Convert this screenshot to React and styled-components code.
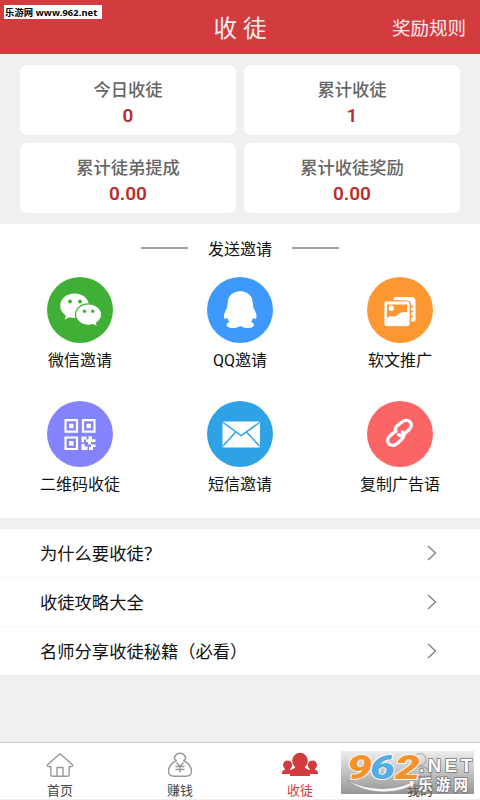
import React from 'react'
import styled, { createGlobalStyle } from 'styled-components'

const GlobalStyle = createGlobalStyle`
  * {
    box-sizing: border-box;
  }
  body {
    margin: 0;
    background: #f0f0f0;
    font-family: Roboto, "Noto Sans CJK SC", sans-serif;
    color: #111;
  }
`

const Page = styled.div`
  position: relative;
  display: flex;
  flex-direction: column;
  width: 480px;
  height: 800px;
  overflow: hidden;
  background: #f0f0f0;
`

const Header = styled.header`
  display: grid;
  grid-template-columns: 1fr auto 1fr;
  align-items: center;
  height: 54px;
  padding: 3px 14px 0;
  background: #d33c3e;
  color: #fdeeee;
`

const Title = styled.h1`
  grid-column: 2;
  margin: 0;
  font-size: 23.5px;
  font-weight: 400;
  line-height: 30px;
`

const Rules = styled.span`
  justify-self: end;
  font-size: 18.5px;
  line-height: 24px;
`

const SiteTag = styled.div`
  position: absolute;
  left: 4px;
  top: 5px;
  width: 98px;
  height: 14px;
  background: #fff;
  color: #000;
  font: bold 9.3px/15px "Noto Sans", "Noto Sans CJK SC", sans-serif;
  letter-spacing: 0.12px;
  white-space: nowrap;
  padding-left: 1px;
`

const Stats = styled.section`
  display: grid;
  grid-template-columns: 1fr 1fr;
  grid-auto-rows: 70px;
  gap: 8px;
  padding: 11px 20px;
`

const Card = styled.div`
  display: flex;
  flex-direction: column;
  align-items: center;
  padding-top: 12px;
  border-radius: 7px;
  background: #fff;
  font-size: 17.3px;
  font-weight: 500;
  line-height: 26px;
  color: #666;
`

const Amount = styled.strong`
  font-size: 19px;
  font-weight: 600;
  line-height: 26px;
  color: #b92d30;
`

const Invite = styled.section`
  height: 294px;
  background: #fff;
`

const Divider = styled.h2`
  display: flex;
  align-items: center;
  justify-content: center;
  gap: 20px;
  margin: 0;
  height: 47px;
  font-size: 16px;
  font-weight: 400;

  &::before,
  &::after {
    content: '';
    width: 47px;
    height: 2px;
    background: #a2a2a2;
  }
`

const Channels = styled.div`
  display: grid;
  grid-template-columns: repeat(3, 160px);
  grid-auto-rows: 123.5px;
  padding-top: 6px;
`

const Channel = styled.div`
  display: flex;
  flex-direction: column;
  align-items: center;
  gap: 6px;
  font-size: 16px;
  line-height: 24px;
`

const Disc = styled.div`
  display: flex;
  flex: none;
  width: 66px;
  height: 66px;
  border-radius: 50%;
  background: ${p => p.color};
`

const Faq = styled.section`
  margin-top: 11px;
  background: #fff;
`

const FaqRow = styled.div`
  display: flex;
  align-items: center;
  justify-content: space-between;
  height: 49px;
  padding: 0 42px 0 40px;
  font-size: 17.3px;
  border-bottom: 1px solid #f8f8f8;

  &:last-child {
    height: 48px;
    border-bottom: 0;
  }

  span {
    padding-bottom: 2px;
  }
`

const TabBar = styled.nav`
  display: grid;
  grid-template-columns: repeat(4, 120px);
  height: 58px;
  margin-top: auto;
  background: #fff;
  border-top: 1px solid #ccc;
  border-bottom: 1px solid #eee;
`

const Tab = styled.div`
  display: flex;
  flex-direction: column;
  align-items: center;
  padding-top: 9px;
  gap: 3px;
  font-size: 13px;
  line-height: 20px;
  color: ${p => (p.$active ? `#d33c3e` : `#444`)};
`

const Watermark = styled.div`
  position: absolute;
  left: 341px;
  top: 751px;
  width: 133px;
  height: 43px;
  background: linear-gradient(rgba(225, 225, 225, 0.6), rgba(100, 100, 100, 0.68));

  svg {
    display: block;
    overflow: visible;
  }
`

const Wechat = () => (
  <svg width="66" height="66" viewBox="0 0 66 66" fill="#fff">
    <path d="M27.500 16.500c-8.100 0-14.300 5.500-14.300 12.300 0 4.100 2 7.400 5.700 9.600l-1.300 4.200 5-2.400c1.700.5 3.300.8 5 .8 8 0 14.500-5.300 14.500-12.200S35.600 16.500 27.500 16.500z" />
    <path
      d="M41.500 26.800c-7.300 0-13 4.800-13 10.700s5.700 10.800 13 10.800c1.500 0 3-.2 4.300-.7l4.800 2.300-1-4c3-1.900 5-5 5-8.400 0-5.900-5.800-10.700-13.100-10.700z"
      stroke="#3fb035"
      strokeWidth="1.200"
    />
    <g fill="#3fb035">
      <circle cx="23" cy="24.500" r="2" />
      <circle cx="33" cy="24.500" r="2" />
      <circle cx="37.500" cy="34.200" r="1.700" />
      <circle cx="45.700" cy="34.200" r="1.700" />
    </g>
  </svg>
)

const QQ = () => (
  <svg width="66" height="66" viewBox="0 0 66 66" fill="#fff">
    <path d="M33.300 14.200c-8 0-12.600 5.400-12.600 12 0 1.500-.8 3-.6 4.500-2.300 3.600-3.600 7.500-2.900 10.300.4 1.500 1.700 1.100 3.200-.6.3 1.500.9 3 2.200 4.500-2.300.6-3 1.600-3 3 0 2.300 3.600 3.300 7.400 3 2.600-.2 4.800-.9 6.300-2 1.500 1.100 3.600 1.800 6.200 2 3.700.3 7.400-.7 7.400-3 0-1.400-.7-2.400-3-3 1.300-1.500 1.900-3 2.200-4.500 1.500 1.700 2.800 2.100 3.200.6.700-2.800-.6-6.700-2.900-10.300.2-1.500-.6-3-.6-4.500 0-6.600-4.500-12-12.500-12z" />
  </svg>
)

const Article = () => (
  <svg width="66" height="66" viewBox="0 0 66 66">
    <path d="M26.500 23v-1.500q0-1.500 1.500-1.500h16.500q4 0 4 4v19q0 1.500-1.500 1.500h-3V27q0-3-3-3z" fill="#fff" />
    <rect x="17" y="24" width="26" height="25.500" rx="2.800" fill="#fff" stroke="#fc9732" strokeWidth=".8" />
    <path d="M20 41V27.500h20v8c-8-2.500-9 5-14 4-2.500-.5-4-.8-6 1.500z" fill="#fc9732" />
    <circle cx="24.300" cy="31.300" r="2.700" fill="#fff" />
    <path d="M43.500 29.500h2.800M43.500 34.500h2.800M43.500 39.500h2.800" stroke="#fc9732" strokeWidth="1.400" />
  </svg>
)

const QrCode = () => (
  <svg width="66" height="66" viewBox="0 0 66 66" fill="none" stroke="#fff">
    <path
      d="M18.500 19.200h11.500v11.500H18.500zM36 19.200h11.500v11.500H36zM18.500 36.500h11.500V48H18.500z"
      strokeWidth="2.200"
    />
    <path
      d="M22 22.700h4.500v4.500H22zM39.500 22.700H44v4.500h-4.500zM22 40h4.500v4.500H22zM34.500 35.500h5v3H37v3h-2.500zM41.500 35.300H45v3h3.500V41H44v2.500h-3V41h-2v-2.500h2.500zM34.500 43h3v2.500h3V49h-6zM44 43.500h4.500V46H46v3h-4v-3h2z"
      fill="#fff"
      stroke="none"
    />
  </svg>
)

const Sms = () => (
  <svg width="66" height="66" viewBox="0 0 66 66">
    <rect x="15.500" y="20.500" width="37.500" height="26" rx="1.500" fill="#fff" />
    <path
      d="M16 21.500l18.200 13 18.300-13M16 45l12.700-14M52.500 45L39.500 31"
      fill="none"
      stroke="#2fa2e5"
      strokeWidth="1.500"
    />
  </svg>
)

const CopyLink = () => (
  <svg width="66" height="66" viewBox="0 0 66 66" fill="none" stroke="#fff" strokeWidth="3.300" strokeLinecap="round">
    <path d="M29 30.500c-1.300-1.900-.8-3.700.8-5.300l4.500-3.700c2.900-2.600 6.500-2.900 8.600-.8 2.300 2.200 1.900 5.300-.8 7.900l-4.800 4.300c-1.900 1.600-4 2-5.900.8" />
    <path d="M35.500 31c2.200 2.200 1.600 4.800-.4 6.800l-4.400 4.200c-2.800 2.700-6.500 3.100-8.700.9-2.200-2.100-1.800-5.300.9-7.900l4-3.600" />
  </svg>
)

const Chevron = () => (
  <svg width="11" height="16" viewBox="0 0 11 16" fill="none" stroke="#888" strokeWidth="1.500">
    <path d="M1 1l7.500 7L1 15" />
  </svg>
)

const Home = () => (
  <svg width="28" height="26" viewBox="0 0 28 26" fill="none" stroke="#999" strokeWidth="1.400" strokeLinejoin="round">
    <path d="M14 1.700L1.500 12.700q-.8 1.800 1.300 1.800h2v8q0 1.800 1.800 1.800h15q1.600 0 1.600-1.800v-8h2q2 0 1.300-1.800z" />
    <path d="M11 24v-8.500h6V24" />
  </svg>
)

const Earn = () => (
  <svg width="28" height="26" viewBox="0 0 28 26" fill="none" stroke="#999" strokeWidth="1.400" strokeLinejoin="round">
    <path d="M10.500 8.500C7.700 7 7.700 5.300 9.300 4.500 9.700 2.300 12 1.300 14 1.300s4.300 1 4.700 3.200c1.600.8 1.600 2.500-1.200 4 4.500 2 8 6.500 8 10.300 0 3.800-2.500 5.500-5.500 5.500H8c-3 0-5.500-1.700-5.500-5.500 0-3.800 3.500-8.300 8-10.300z" />
    <path d="M10.500 10.500l3.500 4 3.500-4M9.500 14.500h9M9.500 17.500h9M14 14.500v6" />
  </svg>
)

const Apprentices = () => (
  <svg width="36" height="26" viewBox="0 0 36 26" fill="#d33c3e">
    <ellipse cx="18" cy="8.800" rx="7.800" ry="8" />
    <circle cx="5.600" cy="13" r="4.600" />
    <circle cx="30.400" cy="13" r="4.600" />
    <path d="M8 24v-3.500c0-2.500 2-3.500 5-4.500v-4h10v4c3 1 5 2 5 4.500V24z" />
    <path d="M0 22v-1.500q0-2 3-3V15h5v2.500l3 1.500v3zM36 22v-1.500q0-2-3-3V15h-5v2.500l-3 1.500v3z" />
  </svg>
)

const Mine = () => (
  <svg width="28" height="26" viewBox="0 0 28 26" fill="none" stroke="#999" strokeWidth="1.400">
    <circle cx="14" cy="7.500" r="6" />
    <path d="M3 24.500c0-7 5-10 11-10s11 3 11 10z" />
  </svg>
)

const Logo = () => (
  <svg width="133" height="43" viewBox="0 0 133 43">
    <path d="M7 29c15 9 42 12 62 3l-2-2.500 7 .5-3 8-1.500-3C50 45 20 42 7 29z" fill="#f7f7f7" stroke="#888" strokeWidth=".6" />
    <g
      fontFamily="Roboto, sans-serif"
      fontWeight="900"
      fontStyle="italic"
      fontSize="33"
      stroke="#fff"
      strokeWidth="1.600"
      paintOrder="stroke"
    >
      <text x="6" y="28" textLength="25" lengthAdjust="spacingAndGlyphs" fill="#f69328">9</text>
      <text x="29" y="28" textLength="25" lengthAdjust="spacingAndGlyphs" fill="#54ade2">6</text>
      <text x="54" y="28" textLength="25" lengthAdjust="spacingAndGlyphs" fill="#f69328">2</text>
    </g>
    <g fill="#fff" stroke="#777" strokeWidth="1.600" paintOrder="stroke" fontWeight="700">
      <text x="78" y="20.500" fontSize="18.500" textLength="53" fontFamily="Liberation Sans, sans-serif">.NET</text>
      <text x="77" y="38.500" fontSize="14.500" textLength="50" fontFamily="Noto Sans CJK SC, sans-serif">乐游网</text>
    </g>
  </svg>
)

const stats = [
  ['今日收徒', '0'],
  ['累计收徒', '1'],
  ['累计徒弟提成', '0.00'],
  ['累计收徒奖励', '0.00'],
]

const channels = [
  { label: '微信邀请', color: '#3fb035', Icon: Wechat },
  { label: 'QQ邀请', color: '#3d99fc', Icon: QQ },
  { label: '软文推广', color: '#fc9732', Icon: Article },
  { label: '二维码收徒', color: '#8583fc', Icon: QrCode },
  { label: '短信邀请', color: '#2fa2e5', Icon: Sms },
  { label: '复制广告语', color: '#fc6565', Icon: CopyLink },
]

const questions = ['为什么要收徒？', '收徒攻略大全', '名师分享收徒秘籍（必看）']

const tabs = [
  { label: '首页', Icon: Home },
  { label: '赚钱', Icon: Earn },
  { label: '收徒', Icon: Apprentices, active: true },
  { label: '我的', Icon: Mine },
]

export default function App() {
  return (
    <Page>
      <GlobalStyle />
      <Header>
        <Title>收 徒</Title>
        <Rules>奖励规则</Rules>
      </Header>
      <Stats>
        {stats.map(([label, value]) => (
          <Card key={label}>
            {label}
            <Amount>{value}</Amount>
          </Card>
        ))}
      </Stats>
      <Invite>
        <Divider>发送邀请</Divider>
        <Channels>
          {channels.map(({ label, color, Icon }) => (
            <Channel key={label}>
              <Disc color={color}>
                <Icon />
              </Disc>
              {label}
            </Channel>
          ))}
        </Channels>
      </Invite>
      <Faq>
        {questions.map(text => (
          <FaqRow key={text}>
            <span>{text}</span>
            <Chevron />
          </FaqRow>
        ))}
      </Faq>
      <TabBar>
        {tabs.map(({ label, Icon, active }) => (
          <Tab key={label} $active={active}>
            <Icon />
            {label}
          </Tab>
        ))}
      </TabBar>
      <SiteTag>乐游网 www.962.net</SiteTag>
      <Watermark>
        <Logo />
      </Watermark>
    </Page>
  )
}
